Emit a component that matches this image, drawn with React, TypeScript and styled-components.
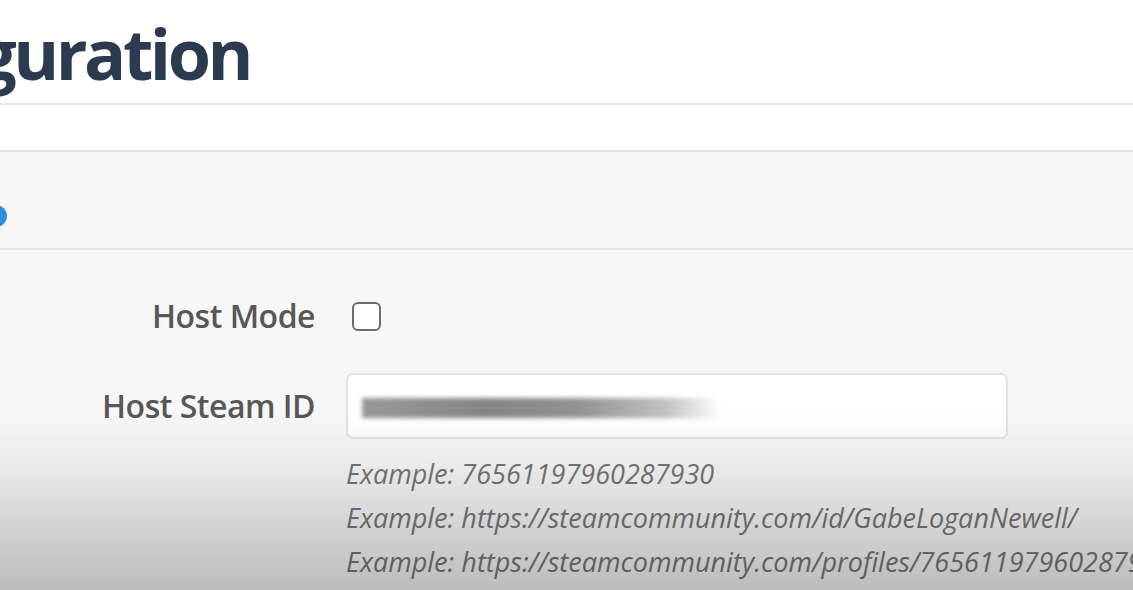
import React from "react";
import styled, { createGlobalStyle } from "styled-components";

const Global = createGlobalStyle`
  html, body { margin: 0; padding: 0; background: #ffffff; }
  body { font-family: "Open Sans", "Noto Sans", sans-serif; }
`;

const Page = styled.div`
  position: relative;
  width: 1133px;
  height: 590px;
  overflow: hidden;
  display: flex;
  flex-direction: column;
  background: #ffffff;
`;

const TitleBar = styled.header`
  height: 103px;
  border-bottom: 2px solid #e8e8e8;
  display: flex;
  flex-shrink: 0;
`;

const TitleClip = styled.div`
  width: 250px;
  display: flex;
  justify-content: flex-end;
  padding-top: 18px;
`;

const Title = styled.h1`
  margin: 0;
  font-family: "Open Sans", sans-serif;
  font-weight: 700;
  font-size: 70px;
  line-height: 1;
  color: #2b3a4f;
  white-space: nowrap;
  letter-spacing: -3.5px;
`;

const Gap = styled.div`
  height: 45px;
  flex-shrink: 0;
`;

const Panel = styled.section`
  flex: 1;
  border-top: 2px solid #e4e4e4;
  background: #f7f7f7;
  display: flex;
  flex-direction: column;
`;

const PanelHeader = styled.div`
  height: 98px;
  border-bottom: 2px solid #e4e4e4;
  display: flex;
  align-items: flex-start;
  padding-top: 53px;
  box-sizing: border-box;
`;

const Dot = styled.span`
  display: block;
  width: 22px;
  height: 22px;
  margin-left: -15px;
  border-radius: 50%;
  background: #2c8edc;
`;

const Form = styled.div`
  display: grid;
  grid-template-columns: 315px 662px;
  column-gap: 31px;
  row-gap: 37px;
  padding-top: 46px;
  align-items: center;
`;

const Label = styled.label`
  justify-self: end;
  font-family: "Open Sans", sans-serif;
  font-weight: 600;
  font-size: 32px;
  line-height: 40px;
  color: #575757;
  white-space: nowrap;
  letter-spacing: -0.5px;
`;

const Checkbox = styled.span`
  display: block;
  width: 25px;
  height: 25px;
  margin-left: 6px;
  border: 2px solid #6b6b6b;
  border-radius: 6px;
  background: #ffffff;
`;

const Input = styled.div`
  height: 66px;
  box-sizing: border-box;
  border: 2px solid #e3e3e3;
  border-radius: 7px;
  background: #ffffff;
  display: flex;
  align-items: center;
  padding-left: 14px;
`;

const Redacted = styled.span`
  display: block;
  width: 358px;
  height: 20px;
  margin-top: 4px;
  background: linear-gradient(
    90deg,
    #999999 0%,
    #858585 35%,
    #929292 60%,
    #c2c2c2 85%,
    rgba(255, 255, 255, 0) 100%
  );
  filter: blur(2px);
`;

const Help = styled.div`
  grid-column: 2;
  margin-top: -24px;
  display: flex;
  flex-direction: column;
`;

const HelpLine = styled.span`
  font-family: "Open Sans", sans-serif;
  font-style: italic;
  font-size: 27px;
  line-height: 44px;
  color: #777777;
  white-space: nowrap;
`;

const Shade = styled.div`
  position: absolute;
  left: 0;
  right: 0;
  bottom: 0;
  height: 180px;
  pointer-events: none;
  background: linear-gradient(
    180deg,
    rgba(0, 0, 0, 0) 0%,
    rgba(0, 0, 0, 0.05) 30%,
    rgba(0, 0, 0, 0.24) 100%
  );
`;

export default function App() {
  return (
    <Page>
      <Global />
      <TitleBar>
        <TitleClip>
          <Title>Configuration</Title>
        </TitleClip>
      </TitleBar>
      <Gap />
      <Panel>
        <PanelHeader>
          <Dot />
        </PanelHeader>
        <Form>
          <Label>Host Mode</Label>
          <div>
            <Checkbox role="checkbox" aria-checked="false" />
          </div>
          <Label>Host Steam ID</Label>
          <Input>
            <Redacted />
          </Input>
          <Help>
            <HelpLine>Example: 76561197960287930</HelpLine>
            <HelpLine>Example: https://steamcommunity.com/id/GabeLoganNewell/</HelpLine>
            <HelpLine>Example: https://steamcommunity.com/profiles/76561197960287930</HelpLine>
          </Help>
        </Form>
      </Panel>
      <Shade />
    </Page>
  );
}
